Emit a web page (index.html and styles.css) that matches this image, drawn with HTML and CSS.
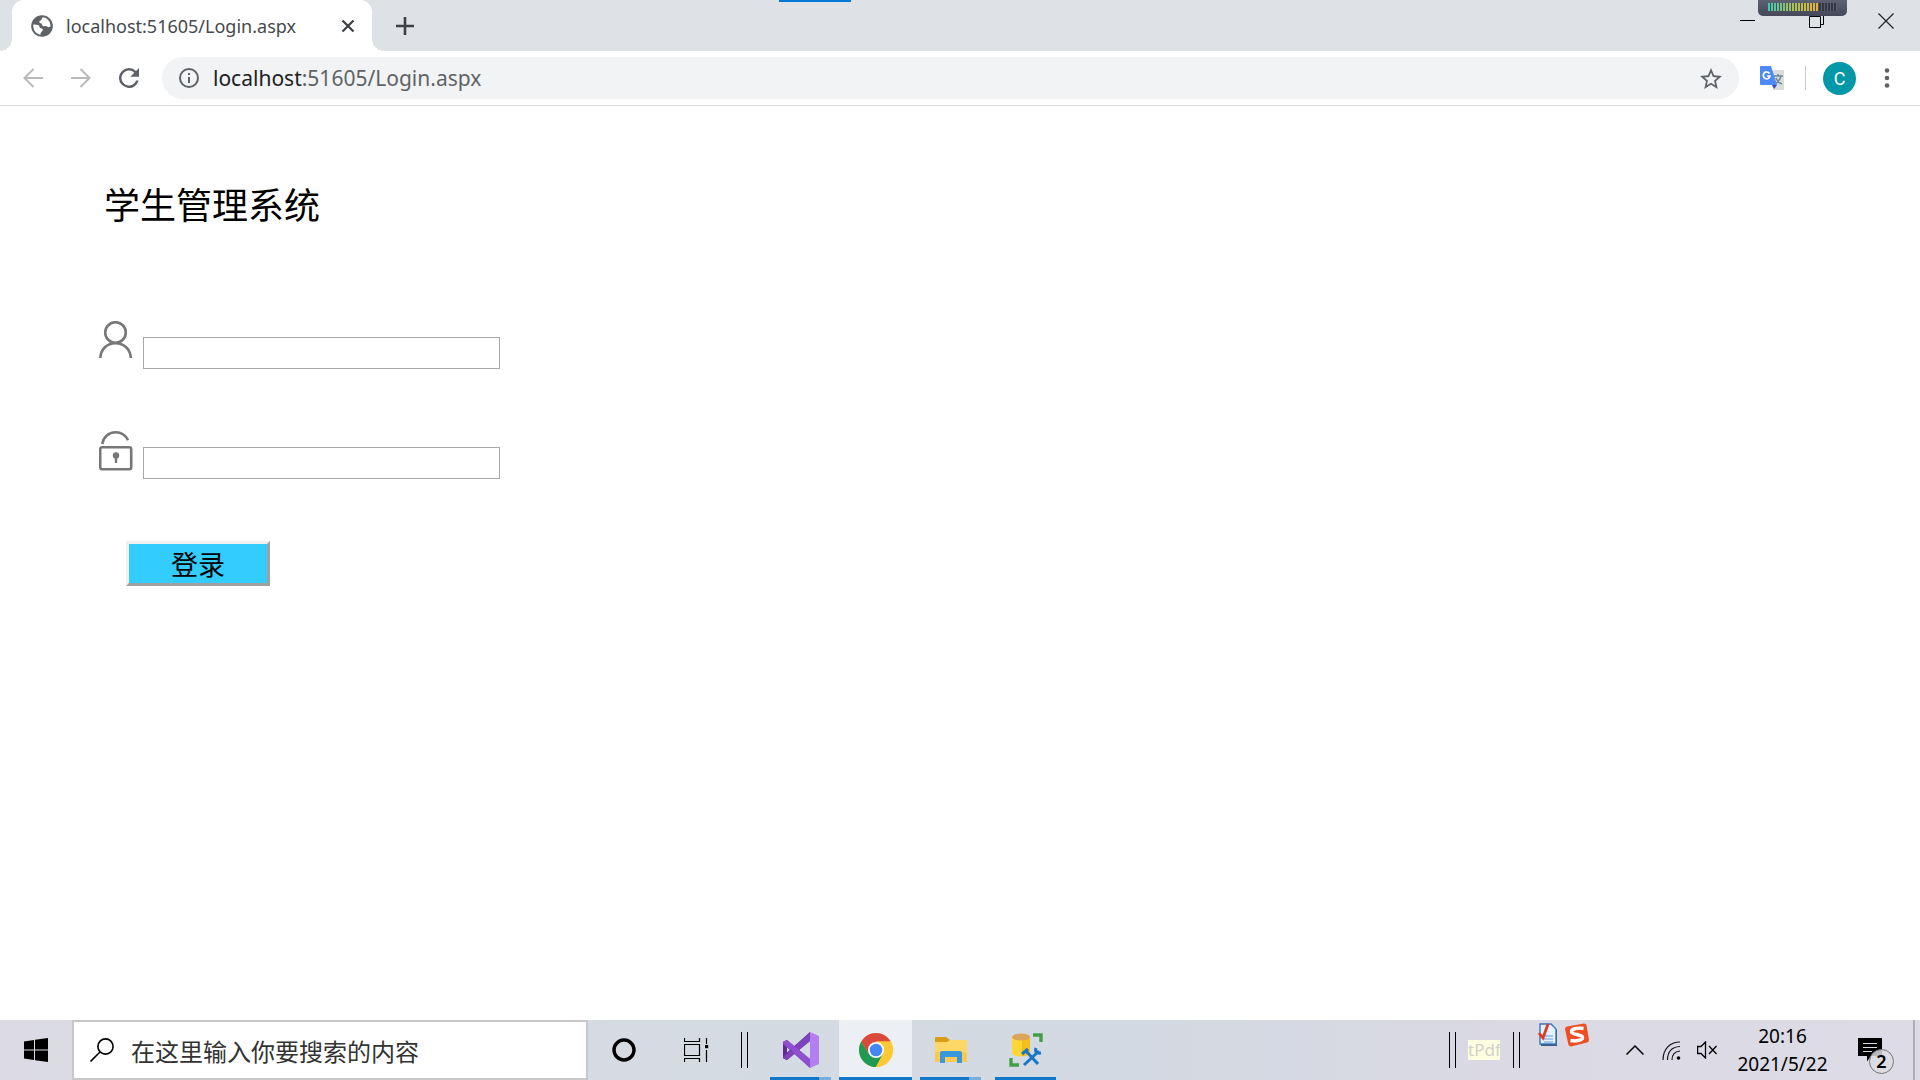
FILE: index.html
```html
<!DOCTYPE html>
<html lang="zh-CN">
<head>
<meta charset="utf-8">
<meta name="viewport" content="width=device-width, initial-scale=1">
<title>学生管理系统</title>
<link rel="stylesheet" href="styles.css">
</head>
<body>
<header class="browser">
  <div class="tabstrip">
    <div class="tab">
      <svg class="favicon" viewBox="0 0 24 24" width="26" height="26" aria-hidden="true"><path fill="#5f6368" d="M12 2C6.500 2 2 6.500 2 12s4.500 10 10 10 10-4.500 10-10S17.500 2 12 2z"/><path fill="#fff" d="M4 10.500c2 .2 4 0 5 .8 1.200 1 .2 2.200 1.800 2.700 1.700.4 2.600 1 1.700 2.300-.8 1-2 1.500-2 3.700-4-.7-7-4.500-6.500-9.500zM12.500 4l-1 2.200c-.5 1-2 .6-2 2 0 1.300 2.500.8 2.500 2.300 0 1.200 1.500 2 3 1.600 1.600-.4 1.800 1 3.200 1l1.600-.6c.2-4.300-2.800-8.300-7.300-8.500z"/></svg>
      <span class="tab-title">localhost:51605/Login.aspx</span>
      <button class="plain tab-close" aria-label="关闭标签页"><svg viewBox="0 0 16 16" width="16" height="16"><path d="M2.500 2.500l11 11m0-11l-11 11" stroke="#3c4043" stroke-width="2.200"/></svg></button>
    </div>
    <button class="plain new-tab" aria-label="新标签页"><svg viewBox="0 0 18 18" width="18" height="18"><path d="M9 0v18M0 9h18" stroke="#3c4043" stroke-width="2.600"/></svg></button>
    <div class="window-controls">
      <button class="plain win" aria-label="最小化"><svg viewBox="0 0 16 16" width="16" height="16"><path d="M0 7.500h15" stroke="#000"/></svg></button>
      <button class="plain win" aria-label="还原"><svg viewBox="0 0 16 16" width="16" height="16"><path d="M.5 3.500h11v11H.5zM3.500 3.500v-3h11v11h-3" fill="none" stroke="#000"/></svg></button>
      <button class="plain win" aria-label="关闭"><svg viewBox="0 0 16 16" width="16" height="16"><path d="M.5.5l15 15m0-15l-15 15" stroke="#222" stroke-width="1.200"/></svg></button>
    </div>
    <div class="progress-mark"></div>
    <div class="level-meter"><div class="level-on"></div><div class="level-off"></div></div>
  </div>
  <div class="toolbar">
    <button class="plain nav" aria-label="后退"><svg viewBox="0 0 20 20" width="20" height="20"><path d="M20 10H2M10.500 1L1.500 10l9 9" fill="none" stroke="#bababa" stroke-width="2"/></svg></button>
    <button class="plain nav" aria-label="前进"><svg viewBox="0 0 20 20" width="20" height="20"><path d="M0 10h18M9.500 1l9 9-9 9" fill="none" stroke="#bababa" stroke-width="2"/></svg></button>
    <button class="plain nav" aria-label="刷新"><svg viewBox="4 4 16 16" width="20" height="20"><path fill="#5f6368" d="M17.650 6.350A7.958 7.958 0 0 0 12 4a8 8 0 1 0 7.730 10h-2.080A6 6 0 1 1 12 6c1.660 0 3.140.69 4.220 1.780L13 11h7V4z"/></svg></button>
    <div class="omnibox">
      <svg viewBox="0 0 20 20" width="20" height="20" aria-hidden="true"><circle cx="10" cy="10" r="9" fill="none" stroke="#5f6368" stroke-width="2"/><path d="M10 9v6M10 5v2" stroke="#5f6368" stroke-width="2"/></svg>
      <div class="address" role="textbox" contenteditable="true" spellcheck="false" aria-label="地址栏"><span class="host">localhost</span>:51605/Login.aspx</div>
      <button class="plain star" aria-label="收藏"><svg viewBox="2 2 20 19" width="22" height="21"><path fill="#5f6368" d="M22 9.240l-7.190-.62L12 2 9.190 8.630 2 9.240l5.460 4.730L5.820 21 12 17.270 18.180 21l-1.630-7.030L22 9.240zM12 15.400l-3.760 2.270 1-4.280-3.320-2.880 4.380-.38L12 6.100l1.710 4.040 4.380.38-3.320 2.880 1 4.280L12 15.400z"/></svg></button>
    </div>
    <button class="plain translate" aria-label="翻译"><svg viewBox="0 0 24 24" width="24" height="24"><path fill="#dcdcdc" d="M11 4h13v20H13z"/><path d="M14 10h9M18 8v2M21 10c-1 4-3 6-6 8M16 12c1 3 3 5 6 6" fill="none" stroke="#6b8a94" stroke-width="1.500"/><path fill="#3a48b8" d="M12 19h5l-3 4z"/><path fill="#4c8bf5" d="M1 0h10l6 19H1q-1 0-1-1V1q0-1 1-1z"/><path d="M9.500 7.500A3.400 3.400 0 1 0 10 10H7" fill="none" stroke="#fff" stroke-width="1.700"/></svg></button>
    <div class="divider"></div>
    <button class="plain avatar" aria-label="用户">C</button>
    <button class="plain more" aria-label="更多"><svg viewBox="0 0 6 20" width="6" height="20"><g fill="#5f6368"><circle cx="3" cy="2.500" r="2.300"/><circle cx="3" cy="10" r="2.300"/><circle cx="3" cy="17.500" r="2.300"/></g></svg></button>
  </div>
</header>

<main class="page">
  <h1 class="title">学生管理系统</h1>
  <form class="login">
    <div class="field">
      <label for="user" aria-label="用户名"><svg viewBox="0 0 34 38" width="34" height="38"><g fill="none" stroke="#777" stroke-width="2.600"><circle cx="16.500" cy="11.500" r="10.300"/><path d="M1.300 37C1.800 28 8 22.300 16.500 22.300S31.200 28 31.900 37"/></g></svg></label>
      <input id="user" type="text">
    </div>
    <div class="field">
      <label for="pass" aria-label="密码"><svg viewBox="0 0 34 40" width="34" height="40"><g fill="none" stroke="#777"><rect x="1.200" y="16.200" width="31" height="22" rx="2" stroke-width="2.600"/><path d="M3.300 13C4.500 6 9.500 1.300 16.500 1.300c5.500 0 10 2.700 12.500 8" stroke-width="2.600"/></g><circle cx="17" cy="24.500" r="3.200" fill="#777"/><path d="M17 25v7" stroke="#777" stroke-width="2.400"/></svg></label>
      <input id="pass" type="password">
    </div>
    <button class="submit" type="submit">登录</button>
  </form>
</main>

<footer class="taskbar">
  <button class="plain start" aria-label="开始"><svg viewBox="0 0 24 24" width="24" height="24"><path d="M0 3.400L10 2v9.500H0zM11 1.800L24 0v11.500H11zM0 12.500h10V22L0 20.600zM11 12.500h13V24l-13-1.800z"/></svg></button>
  <div class="search">
    <svg viewBox="0 0 24 24" width="24" height="24" aria-hidden="true"><circle cx="15.500" cy="8.500" r="7.600" fill="none" stroke="#000" stroke-width="1.600"/><path d="M10 14L.5 23.500" stroke="#000" stroke-width="1.600"/></svg>
    <input class="search-input" type="text" placeholder="在这里输入你要搜索的内容" aria-label="搜索">
  </div>
  <button class="plain shell" aria-label="Cortana"><svg viewBox="0 0 24 24" width="24" height="24"><circle cx="12" cy="12" r="10" fill="none" stroke="#000" stroke-width="3.400"/></svg></button>
  <button class="plain shell" aria-label="任务视图"><svg viewBox="0 0 25 24" width="25" height="24"><path d="M.5 0v3.500h15V0M.5 6.500h15v11H.5zM.5 24v-3.500h15V24M22.500 0v6M22.500 12v12" fill="none" stroke="#000" stroke-width="1.200"/><path d="M21 7h3.200v3.200H21z"/></svg></button>
  <div class="grip"></div>
  <nav class="apps">
    <button class="plain app app-stack" aria-label="Visual Studio"><svg viewBox="0 0 36 36" width="36" height="36"><path fill="#5c2d91" d="M0 10l4-2v20l-4-2z"/><path fill="#8a49c8" d="M0 10l4-2 23 19v9L0 12z"/><path fill="#6b35a8" d="M0 26l4 2L27 9V0L0 24z"/><path fill="#7e42bd" d="M0 26l4 2L27 9V0z"/><path fill="#8f4fd0" d="M0 10l4-2 23 19v9z"/><path fill="#b47df0" d="M27 0l9 4v28l-9 4z"/></svg></button>
    <button class="plain app app-active" aria-label="Chrome"><svg viewBox="0 0 34 34" width="34" height="34"><circle cx="17" cy="17" r="17" fill="#fcc934"/><path fill="#1e9a53" d="M2.300 8.500A17 17 0 0 0 17 34l7-13-7 3-7-3z"/><path fill="#d94a3d" d="M2.300 8.500a17 17 0 0 1 29.400 0H17l-7 12.500z"/><path fill="#fcc934" d="M17 34A17 17 0 0 0 31.700 8.500H17l7 12.500z"/><circle cx="17" cy="17" r="8" fill="#fff"/><circle cx="17" cy="17" r="6.300" fill="#4486f4"/></svg></button>
    <button class="plain app app-stack" aria-label="文件资源管理器"><svg viewBox="0 0 32 27" width="32" height="27"><path fill="#d99c14" d="M0 1q0-1 1-1h10l4 3v5H0z"/><path fill="#ffd767" d="M0 5h12l3-2h16q1 0 1 1v21H0z"/><path fill="#fbc94f" d="M0 15h32v10H0z"/><path fill="#3a96dd" d="M5 26V16q0-2 2-2h18q2 0 2 2v10h-5v-6H10v6z"/></svg></button>
    <button class="plain app app-single" aria-label="数据库工具"><svg viewBox="0 0 34 34" width="34" height="34"><path fill="#ffd633" d="M3 4h18v17q-9 5-18 0z"/><path fill="#f5bd1c" d="M13 4h8v17q-3 2-8 2z"/><ellipse cx="12" cy="4" rx="9" ry="3.500" fill="#dda45c"/><path d="M24 2h8v7M2 25v7h8" fill="none" stroke="#43a047" stroke-width="3.400"/><path d="M17 18l12 13M30 18L15 32" stroke="#1976c5" stroke-width="3"/><path d="M13 21l6-5M27 15q-2 6 5 5" fill="none" stroke="#1976c5" stroke-width="3"/></svg></button>
  </nav>
  <div class="tray">
    <div class="grip"></div>
    <div class="pdf">tPdf</div>
    <div class="grip"></div>
    <div class="langbar">
      <svg viewBox="0 0 20 24" width="20" height="24" aria-hidden="true"><path d="M3 2h11l5 5v16H3z" fill="#3c5878"/><path d="M2 1h11l5 5v15H2z" fill="#e6f1ff" stroke="#3577b9" stroke-width="1.400"/><path d="M6 13h9M6 16h9M6 19h9" stroke="#8fb9e8" stroke-width="1.400"/><path d="M1 10l4 5L10 1" fill="none" stroke="#e03a24" stroke-width="2.800"/></svg>
      <svg viewBox="0 0 24 24" width="24" height="24" aria-hidden="true"><path d="M2 3.500L19 .5q2 0 2.500 2L24 17q0 2-2 2.500L6 23.500q-2 0-2.600-2L0 6q0-2 2-2.500z" fill="#f04e23"/><path d="M18.500 5.500C12 4.500 6 6 6.500 9s10 2 11 5-6 4.500-12 3.500" fill="none" stroke="#fff" stroke-width="3.400"/></svg>
    </div>
    <button class="plain tray-icon" aria-label="显示隐藏的图标"><svg viewBox="0 0 18 10" width="18" height="10"><path d="M.5 9.500L9 1l8.500 8.500" fill="none" stroke="#000" stroke-width="1.500"/></svg></button>
    <button class="plain tray-icon" aria-label="网络"><svg viewBox="0 0 19 19" width="19" height="19"><g fill="none" stroke="#111" stroke-width="1.200"><path d="M1 19C1 8 8 1 18 1"/><path d="M5.500 19C5.500 11 10 6 18 5.500"/><path d="M10 19c0-5 3-8.500 8-9"/></g><circle cx="16.500" cy="17" r="1.800"/></svg></button>
    <button class="plain tray-icon" aria-label="静音"><svg viewBox="0 0 20 18" width="20" height="18"><path d="M.6 5.500H4L8.500 1v16L4 12.500H.6zM12 5l7.500 8M19.500 5L12 13" fill="none" stroke="#000" stroke-width="1.300"/></svg></button>
    <div class="clock"><time>20:16</time><time>2021/5/22</time></div>
    <button class="plain notice" aria-label="通知"><svg viewBox="0 0 24 24" width="24" height="24"><path d="M0 0h24v18H13l-4 5.500V18H0z"/><path d="M5 5.500h14M5 9.500h14M5 13.500h9" stroke="#dcdbe5" stroke-width="1.200"/></svg><span class="badge">2</span></button>
    <button class="plain show-desktop" aria-label="显示桌面"></button>
  </div>
</footer>
</body>
</html>
```
FILE: styles.css
```css
* { box-sizing: border-box; }

body {
  margin: 0;
  min-height: 100vh;
  display: flex;
  flex-direction: column;
  background: #fff;
  color: #000;
  font-family: "Noto Sans", "Noto Sans CJK SC", sans-serif;
}

svg { display: block; flex: none; }

.plain {
  display: flex;
  align-items: center;
  justify-content: center;
  flex: none;
  padding: 0;
  border: 0;
  background: none;
  font: inherit;
}

/* Tab strip */
.tabstrip {
  position: relative;
  display: flex;
  height: 51px;
  padding-left: 12px;
  background: #dee1e6;
}

.tab {
  position: relative;
  display: flex;
  align-items: center;
  width: 360px;
  padding: 0 16px 0 17px;
  border-radius: 12px 12px 0 0;
  background: #fff;
}

.tab::before,
.tab::after {
  content: "";
  position: absolute;
  bottom: 0;
  width: 12px;
  height: 12px;
}

.tab::before { right: 100%; background: radial-gradient(circle at 0 0, transparent 12px, #fff 12px); }
.tab::after { left: 100%; background: radial-gradient(circle at 100% 0, transparent 12px, #fff 12px); }

.tab-title {
  flex: 1;
  margin-left: 11px;
  font-size: 18px;
  line-height: 24px;
  color: #45494d;
  white-space: nowrap;
}

.new-tab { width: 66px; }

.window-controls {
  display: flex;
  margin-left: auto;
  height: 42px;
}

.win { width: 69px; }

.progress-mark {
  position: absolute;
  top: 0;
  left: 779px;
  width: 72px;
  height: 2px;
  background: #0078d7;
}

.level-meter {
  position: absolute;
  top: 0;
  right: 73px;
  display: flex;
  width: 89px;
  height: 16px;
  padding: 3px 10px;
  border-radius: 0 0 5px 5px;
  background: linear-gradient(#5d6273, #444858);
}

.level-on,
.level-off { height: 8px; }

.level-on {
  width: 51px;
  background: repeating-linear-gradient(90deg, transparent 0 2px, #4b5060 2px 3px), linear-gradient(90deg, #3fc8b4, #a8c455 50%, #e8b030);
}

.level-off {
  flex: 1;
  background: repeating-linear-gradient(90deg, #343846 0 2px, #5a5f70 2px 3px);
}

/* Toolbar */
.toolbar {
  display: flex;
  align-items: center;
  height: 55px;
  padding: 0 23px 0 9px;
  border-bottom: 1px solid #dadce0;
}

.nav { width: 48px; height: 42px; }

.omnibox {
  display: flex;
  align-items: center;
  flex: 1;
  height: 42px;
  margin-left: 9px;
  padding: 0 17px;
  border-radius: 21px;
  background: #f1f3f4;
}

.address {
  flex: 1;
  margin-left: 14px;
  outline: 0;
  font-size: 21px;
  line-height: 28px;
  color: #5f6368;
  white-space: nowrap;
}

.host { color: #202124; }

.translate { margin-left: 21px; }

.divider {
  width: 1px;
  height: 24px;
  margin: 0 17px 0 21px;
  background: #c8cacd;
}

.avatar {
  width: 33px;
  height: 33px;
  border-radius: 50%;
  background: #0097a7;
  color: #fff;
  font-family: Roboto, sans-serif;
  font-size: 18px;
}

.more { width: 20px; height: 33px; margin-left: 21px; }

/* Login page */
.page {
  flex: 1;
  padding: 76px 99px;
}

.title {
  margin: 0 0 91px 5px;
  font-size: 36px;
  line-height: 48px;
  font-weight: 400;
}

.login {
  display: flex;
  flex-direction: column;
  align-items: flex-start;
  gap: 62px;
}

.field {
  display: flex;
  gap: 10px;
  height: 48px;
}

.field input {
  align-self: flex-end;
  width: 357px;
  height: 32px;
  padding: 2px 4px;
  border: 1px solid #a9a9a9;
  font-size: 18px;
}

.submit {
  width: 144px;
  height: 45px;
  margin-left: 27px;
  padding: 0;
  border: 3px solid;
  border-color: #f0f0f0 #a0a0a0 #a0a0a0 #f0f0f0;
  background: #3cf;
  color: #000;
  font-family: "Noto Sans CJK SC", sans-serif;
  font-size: 27px;
  line-height: 36px;
}

/* Taskbar */
.taskbar {
  display: flex;
  height: 60px;
  background: linear-gradient(90deg, #dcdbe5, #d5dbe3 35%, #d3d9e2 60%, #dad9e4 78%, #dcdbe6);
}

.start,
.shell { width: 72px; }

.search {
  display: flex;
  align-items: center;
  width: 516px;
  padding: 0 16px;
  border: 2px solid #c8c8ca;
  background: #fff;
}

.search-input {
  flex: 1;
  min-width: 0;
  height: 40px;
  margin-left: 17px;
  padding: 0;
  border: 0;
  outline: 0;
  background: none;
  font-family: "Noto Sans CJK SC", sans-serif;
  font-size: 24px;
}

.search-input::placeholder { color: #333; opacity: 1; }

.grip {
  display: flex;
  justify-content: center;
  align-items: center;
  width: 24px;
}

.grip::before {
  content: "";
  width: 5px;
  height: 36px;
  border: solid #000;
  border-width: 0 1px;
}

.apps {
  display: flex;
  gap: 2px;
  margin-left: 8px;
}

.app {
  position: relative;
  width: 73px;
}

.app::after {
  content: "";
  position: absolute;
  left: 6px;
  right: 6px;
  bottom: 0;
  height: 3px;
  background: #0f78c8;
}

.app-stack::after { background: linear-gradient(90deg, #0f78c8 49px, #76aee0 49px); }
.app-active { background: #eceff3; }
.app-active::after { left: 0; right: 0; }

.tray {
  display: flex;
  align-items: stretch;
  margin-left: auto;
}

.pdf {
  align-self: center;
  width: 32px;
  height: 20px;
  margin: 0 4px;
  overflow: hidden;
  background: #ffffe1;
  color: #d0d0c8;
  font-size: 17px;
  line-height: 20px;
}

.langbar {
  display: flex;
  gap: 7px;
  width: 89px;
  padding: 3px 0 0 10px;
}

.tray-icon { width: 36px; }

.clock {
  display: flex;
  flex-direction: column;
  justify-content: center;
  width: 115px;
  font-size: 19px;
  line-height: 28px;
  text-align: center;
}

.notice { position: relative; width: 60px; }

.badge {
  position: absolute;
  left: 29px;
  top: 29px;
  width: 25px;
  height: 25px;
  border: 1px solid #777;
  border-radius: 50%;
  background: rgba(220, 220, 224, 0.85);
  font-size: 18px;
  line-height: 23px;
  font-weight: 600;
}

.show-desktop {
  width: 7px;
  margin-left: 13px;
  border-left: 2px solid #b0afb8;
}
```
